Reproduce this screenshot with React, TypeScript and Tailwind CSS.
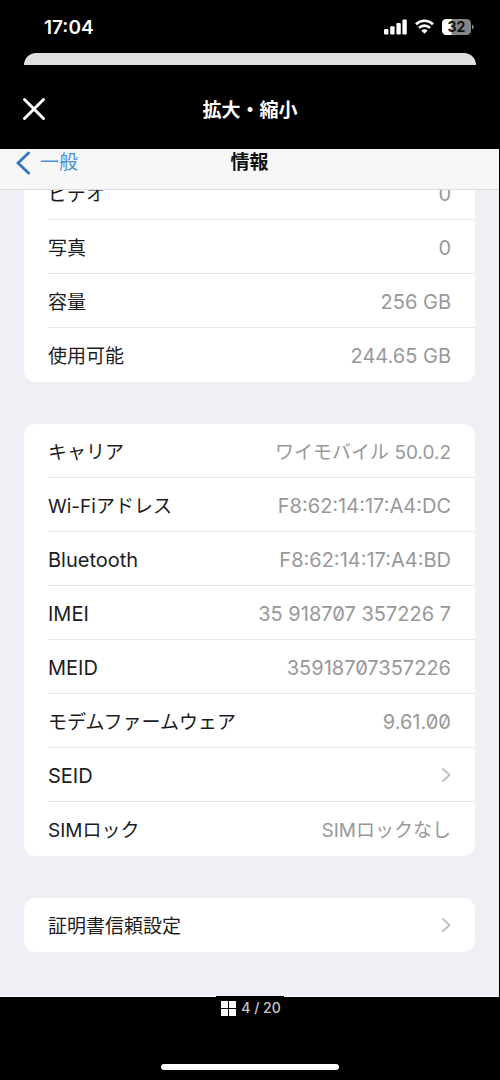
import React from "react";

type Item = { label: string; value?: string; slashed?: boolean; link?: boolean };

const storage: Item[] = [
  { label: "写真", value: "0" },
  { label: "容量", value: "256 GB" },
  { label: "使用可能", value: "244.65 GB" },
];

const network: Item[] = [
  { label: "キャリア", value: "ワイモバイル 50.0.2" },
  { label: "Wi-Fiアドレス", value: "F8:62:14:17:A4:DC" },
  { label: "Bluetooth", value: "F8:62:14:17:A4:BD" },
  { label: "IMEI", value: "35 918707 357226 7", slashed: true },
  { label: "MEID", value: "35918707357226", slashed: true },
  { label: "モデムファームウェア", value: "9.61.00", slashed: true },
  { label: "SEID", link: true },
  { label: "SIMロック", value: "SIMロックなし" },
];

const certificates: Item[] = [{ label: "証明書信頼設定", link: true }];

// Latin-only strings are set one step larger so they balance with the kana.
const typeFor = (text: string) =>
  /^[\x20-\x7e]+$/.test(text) ? "pt-[3px] text-[20px] leading-7" : "pt-[5px] text-[19px] leading-7";

function Chevron() {
  return (
    <svg width="10" height="16" viewBox="0 0 10 16" fill="none" stroke="#c2c2c4" strokeWidth="2" strokeLinecap="round" strokeLinejoin="round" aria-hidden="true">
      <path d="M2 2l6.5 6L2 14" />
    </svg>
  );
}

function Row({ item }: { item: Item }) {
  const frame =
    "ml-6 flex h-[54px] shrink-0 items-center justify-between border-b border-[#e9e9eb] pr-6 group-last:border-transparent";
  if (item.link) {
    return (
      <a href="#" className={frame}>
        <span className={typeFor(item.label)}>{item.label}</span>
        <Chevron />
      </a>
    );
  }
  const value = item.value ?? "";
  return (
    <div className={frame}>
      <span className={typeFor(item.label)}>{item.label}</span>
      <span className={`text-[#98989b] ${typeFor(value)} ${item.slashed ? "slashed-zero" : ""}`}>{value}</span>
    </div>
  );
}

function Rows({ items }: { items: Item[] }) {
  return (
    <ul>
      {items.map((item) => (
        <li key={item.label} className="group">
          <Row item={item} />
        </li>
      ))}
    </ul>
  );
}

function StatusBar() {
  return (
    <div className="flex h-[53px] items-center justify-between pr-[26px] pl-11 text-white">
      <span className="pt-1 text-[19px] font-semibold">17:04</span>
      <div className="flex items-center gap-2">
        <svg width="23" height="16" viewBox="0 0 23 16" fill="#fff" aria-label="電波">
          <rect x="0" y="10" width="4.4" height="5.5" rx="1" />
          <rect x="6.2" y="7.3" width="4.4" height="8.2" rx="1" />
          <rect x="12.4" y="4" width="4.4" height="11.5" rx="1" />
          <rect x="18.4" y="0.5" width="4.4" height="15" rx="1" />
        </svg>
        <svg width="19" height="15" viewBox="0 0 19 15" fill="none" stroke="#fff" strokeWidth="2.7" aria-label="Wi-Fi">
          <path d="M1 5.2C5.7.6 13.3.6 18 5.2" />
          <path d="M4 8.9c3-3 8-3 11 0" />
          <path d="M6.400 11.600c1.800-1.700 4.400-1.700 6.200 0L9.500 14.700z" fill="#fff" stroke="none" />
        </svg>
        <svg width="32" height="16" viewBox="0 0 32 16" aria-label="バッテリー 32%">
          <defs>
            <clipPath id="battery">
              <rect width="29" height="16" rx="4.500" />
            </clipPath>
          </defs>
          <g clipPath="url(#battery)">
            <rect width="29" height="16" fill="#858585" />
            <rect width="9.500" height="16" fill="#fff" />
          </g>
          <path d="M30 5.500c2.300.8 2.300 4.200 0 5z" fill="#858585" />
          <text x="14.500" y="13" textAnchor="middle" fontSize="14" fontWeight="700" fill="#111">
            32
          </text>
        </svg>
      </div>
    </div>
  );
}

export default function App() {
  return (
    <div className="flex min-h-screen flex-col bg-black font-['Inter','Noto_Sans_CJK_JP',sans-serif] text-[#1c1c1e]">
      <StatusBar />
      <div className="mx-6 h-3 rounded-t-xl bg-[#e0e0e0]" />

      <header className="grid h-[84px] grid-cols-[1fr_auto_1fr] items-center px-[22px] pt-1 text-white">
        <button type="button" aria-label="閉じる" className="justify-self-start">
          <svg width="24" height="24" viewBox="0 0 24 24" fill="none" stroke="#fff" strokeWidth="3" strokeLinecap="round" aria-hidden="true">
            <path d="M2.500 2.500l19 19M21.500 2.500l-19 19" />
          </svg>
        </button>
        <h1 className="pt-1 text-[19px] font-bold">拡大・縮小</h1>
      </header>

      <main className="mr-px border-b border-white bg-[#f0eff5] text-[19px]">
        <nav className="grid h-[41px] grid-cols-[1fr_auto_1fr] items-center border-b border-[#dcdce0] bg-[#f7f7f8] px-4 pb-3">
          <a href="#" className="flex items-center gap-[10px] text-[#4a90d0]">
            <svg width="14" height="24" viewBox="0 0 14 24" fill="none" stroke="#3578c6" strokeWidth="3" strokeLinecap="round" strokeLinejoin="round" aria-hidden="true">
              <path d="M12.500 2L2 12l10.500 10" />
            </svg>
            <span className="leading-7">一般</span>
          </a>
          <h2 className="leading-7 font-bold text-[#111]">情報</h2>
        </nav>

        <div className="flex flex-col gap-[42px] px-6 pb-11">
          <section className="rounded-b-xl bg-white">
            <div className="flex h-[30px] flex-col justify-end overflow-hidden">
              <Row item={{ label: "ビデオ", value: "0" }} />
            </div>
            <Rows items={storage} />
          </section>
          <section className="rounded-xl bg-white">
            <Rows items={network} />
          </section>
          <section className="rounded-xl bg-white">
            <Rows items={certificates} />
          </section>
        </div>
      </main>

      <footer className="relative flex flex-1 flex-col items-center justify-between pt-px pb-[10px]">
        <div className="absolute -top-px left-1/2 h-px w-[68px] -translate-x-1/2 bg-black" />
        <div className="flex items-center gap-[5px] pl-[2px] text-[14px] leading-5 font-medium text-[#c8c8c8]">
          <svg width="15" height="15" viewBox="0 0 15 15" fill="#fff" aria-hidden="true">
            <path d="M0 0h7v7H0zM8 0h7v7H8zM0 8h7v7H0zM8 8h7v7H8z" />
          </svg>
          4 / 20
        </div>
        <div className="h-[6px] w-[178px] rounded-full bg-white" />
      </footer>
    </div>
  );
}
